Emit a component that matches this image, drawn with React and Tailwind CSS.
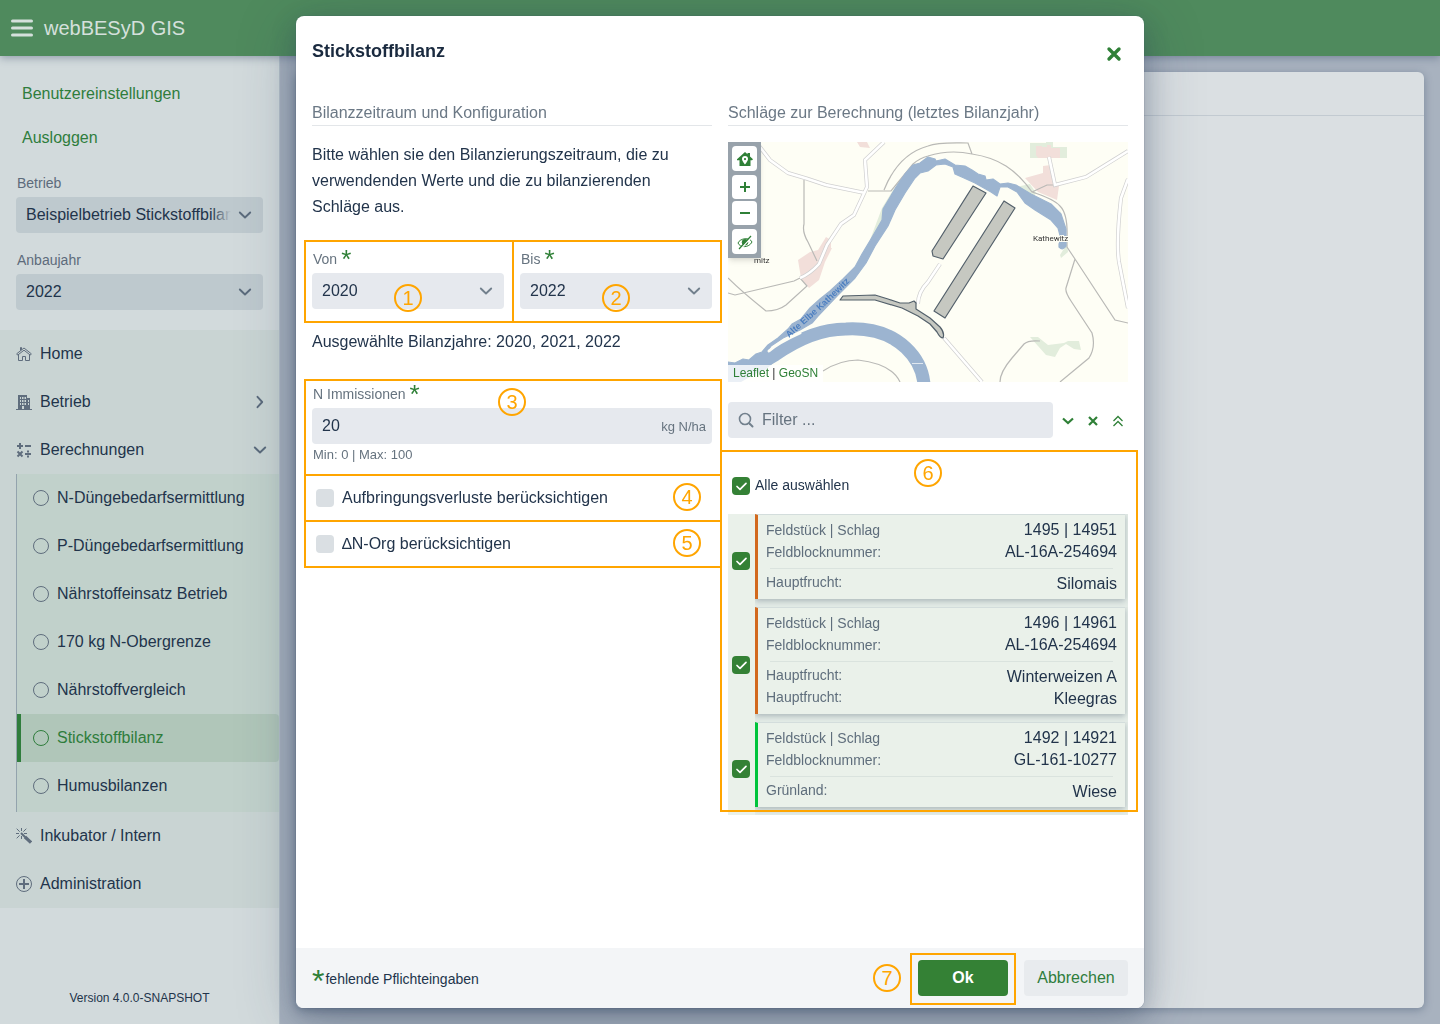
import React from "react";

function Chevron({ className = "", d = "M2.800 5.500L8 10.500l5.200-5" }) {
  return (
    <svg viewBox="0 0 16 16" className={`pointer-events-none size-4 ${className}`} fill="none" stroke="currentColor" strokeWidth="1.900" strokeLinecap="round" strokeLinejoin="round">
      <path d={d} />
    </svg>
  );
}

function Asterisk({ className }) {
  return (
    <span aria-hidden="true" className={`text-[#2f8037] ${className}`}>
      *
    </span>
  );
}

function Marker({ n, className }) {
  return (
    <span className={`pointer-events-none flex size-7 items-center justify-center rounded-full border-2 border-[#ffa500] text-xl leading-none text-[#ffa500] ${className}`}>
      {n}
    </span>
  );
}

function Outline({ className = "-right-[10px] -left-2 inset-y-0" }) {
  return <span aria-hidden="true" className={`pointer-events-none absolute z-10 border-2 border-[#ffa500] ${className}`} />;
}

function SideSelect({ id, label, value, fade }) {
  return (
    <div>
      <label htmlFor={id} className="block px-px pb-1 text-sm leading-5 text-[#5d6b7b]">
        {label}
      </label>
      <div className="relative">
        <select id={id} className="block h-9 w-full appearance-none overflow-hidden rounded bg-[#bec9ce] pr-8 pl-[10px] text-base text-[#22344b]">
          <option>{value}</option>
        </select>
        {fade && <span className="pointer-events-none absolute inset-y-0 right-8 w-5 bg-linear-to-r from-transparent to-[#bec9ce]" />}
        <Chevron className="absolute top-[10px] right-[10px] text-[#5b6b7c]" />
      </div>
    </div>
  );
}

function YearSelect({ id, label, value, marker }) {
  return (
    <div className="relative h-[83px]">
      <Outline />
      <label htmlFor={id} className="flex h-[33px] items-start gap-1 px-px pt-[9px] text-sm leading-5 text-[#66737f]">
        {label}
        <Asterisk className="text-[26px] leading-5" />
      </label>
      <div className="relative">
        <select id={id} className="block h-9 w-full appearance-none rounded bg-[#e6e9ee] px-[10px] text-base text-[#22344b]">
          <option>{value}</option>
        </select>
        <Chevron className="absolute top-[10px] right-[10px] text-[#72808d]" />
        <Marker n={marker} className="absolute top-[11px] left-[82px]" />
      </div>
    </div>
  );
}

function Checkbox({ id, checked, label }) {
  return (
    <span className="relative inline-flex size-[18px] shrink-0">
      <input id={id} type="checkbox" defaultChecked={checked} aria-label={label} className="peer size-[18px] appearance-none rounded bg-[#dadfe3] checked:bg-[#348135]" />
      <svg viewBox="0 0 18 18" className="pointer-events-none absolute inset-0 hidden size-[18px] peer-checked:block" fill="none" stroke="#fff" strokeWidth="1.700" strokeLinecap="round" strokeLinejoin="round">
        <path d="M5 9.500l3 2.800 6-6" />
      </svg>
    </span>
  );
}

const iconProps = { viewBox: "0 0 16 16", className: "size-4 shrink-0", "aria-hidden": true };

const icons = {
  home: (
    <svg {...iconProps} fill="none" stroke="currentColor">
      <path d="M.7 7.800L8 2l7.300 5.800-1 1.300L8 4.200 1.700 9.100zM4.500 4.500V1.500h1v2.300M2.500 9v5.500h4v-4h3v4h4V9" />
    </svg>
  ),
  building: (
    <svg {...iconProps} fill="currentColor" fillRule="evenodd">
      <path d="M2 1h9v3h3v11h2v1H0v-1h2zM4 3v2h1V3zM6 3v2h1.500V3zM8.500 3v2H10V3zM4 6v2h1V6zM6 6v2h1.500V6zM8.500 6v2H10V6zM4 9v2h1V9zM6 9v2h1.500V9zM8.500 9v2H10V9zM12 6v2h1V6zM12 9v2h1V9zM6 12v3h2v-3z" />
    </svg>
  ),
  calc: (
    <svg {...iconProps} fill="none" stroke="currentColor" strokeWidth="2">
      <path d="M1 4h6M4 1v6M9 4h6M9 12h6M1.500 9.500l5 5M6.500 9.500l-5 5" />
      <path d="M11 9.500h2M11 14.500h2" />
    </svg>
  ),
  circle: (
    <svg {...iconProps} fill="none" stroke="currentColor">
      <circle cx="8" cy="8" r="7.500" />
    </svg>
  ),
  wand: (
    <svg {...iconProps} fill="none" stroke="currentColor">
      <path d="M5.500 0v3M5.500 8v3M0 5.500h3M8 5.500h3M.7.7l3 3M10.300.7l-3 3M.7 10.300l3-3" />
      <path strokeWidth="3.200" d="M9 9l6 5.500" />
      <path strokeWidth="2" d="M5 5l5 5" />
    </svg>
  ),
  plus: (
    <svg {...iconProps} fill="none" stroke="currentColor">
      <circle cx="8" cy="8" r="7.500" />
      <path strokeWidth="2" d="M3 8h10M8 3v10" />
    </svg>
  ),
};

function NavItem({ icon, label, arrow }) {
  return (
    <a href="#" className="flex h-12 items-center gap-2 px-4 text-base text-[#22344b]">
      <span className="text-[#5f6d7d]">{icons[icon]}</span>
      {label}
      {arrow && <Chevron d={arrow === "right" ? "M5.500 2.800L10.200 8l-4.700 5.200" : undefined} className="mr-[-5px] ml-auto text-[#5b6b7c]" />}
    </a>
  );
}

const subItems = [
  "N-Düngebedarfsermittlung",
  "P-Düngebedarfsermittlung",
  "Nährstoffeinsatz Betrieb",
  "170 kg N-Obergrenze",
  "Nährstoffvergleich",
  "Stickstoffbilanz",
  "Humusbilanzen",
];

function Sidebar() {
  return (
    <aside className="flex w-[280px] shrink-0 flex-col border-r border-[#b4bfc9] bg-[#d2dadc]">
      <div className="flex flex-col items-start gap-2 pt-5 pl-[22px]">
        <button className="h-9 text-base text-[#2f7d3c]">Benutzereinstellungen</button>
        <button className="h-9 text-base text-[#2f7d3c]">Ausloggen</button>
      </div>
      <div className="flex flex-col gap-[17px] pt-[17px] pr-4 pb-5 pl-4">
        <SideSelect id="betrieb" label="Betrieb" value="Beispielbetrieb Stickstoffbilanz" fade />
        <SideSelect id="jahr" label="Anbaujahr" value="2022" />
      </div>
      <nav className="bg-[#c9d4d3]">
        <NavItem icon="home" label="Home" />
        <NavItem icon="building" label="Betrieb" arrow="right" />
        <NavItem icon="calc" label="Berechnungen" arrow="down" />
        <div className="ml-4 border-l border-[#93a3ad] bg-[#c1d1cb] pb-0.5">
          {subItems.map((t) =>
            t === "Stickstoffbilanz" ? (
              <a key={t} href="#" aria-current="page" className="flex h-12 items-center gap-2 rounded-r border-l-4 border-[#2f7d3c] bg-[#b0c6b9] pl-3 text-base text-[#2f7d3c]">
                {icons.circle}
                {t}
              </a>
            ) : (
              <a key={t} href="#" className="flex h-12 items-center gap-2 pl-4 text-base text-[#22344b]">
                <span className="text-[#5f6d7d]">{icons.circle}</span>
                {t}
              </a>
            ),
          )}
        </div>
        <NavItem icon="wand" label="Inkubator / Intern" />
        <NavItem icon="plus" label="Administration" />
      </nav>
      <p className="mt-auto pb-[18px] text-center text-xs leading-4 text-[#22344b]">Version 4.0.0-SNAPSHOT</p>
    </aside>
  );
}

function MapButton({ label, className, children }) {
  return (
    <button aria-label={label} className={`flex w-[25px] items-center justify-center rounded-sm bg-white text-[#2f8037] ${className}`}>
      {children}
    </button>
  );
}

function FieldMap() {
  const paths =
    "M0 36L16 18V0M76 38V82Q74 90 80 100L89 119M0 136Q14 150 38 169Q50 169 58 163L79 144L72 136M0 151L7 153L66 139L72 136M140 49H163L185 22Q192 16 200 14M156 48C164 28 178 10 200 4M200 4C210 0 225 1 240 1L244 12M200 14C216 9 230 9 244 12Q264 15 278 24Q292 33 304 50Q326 57 332 64Q340 72 339 96V105L347 117L387 178L400 181M304 50L319 43L328 43M347 117L338 146Q337 150 343 159L364 191Q368 205 361 216L332 240M95 229Q112 218 130 218Q164 222 172 240M272 240Q272 230 284 216L296 202Q300 198 312 199";
  const streets =
    "M28 0L42 18L60 31Q78 36 98 43L137 51M156 0L137 18L139 45L126 73L113 82L99 103L91 122Q82 132 72 136M321 15L327 43L358 35L400 9M400 37L393 56Q388 100 391 120L400 166M212 122L200 140Q190 150 190 162M216 196L254 240";
  return (
    <div className="relative h-60 overflow-hidden">
      <svg viewBox="0 0 400 240" preserveAspectRatio="xMidYMid slice" className="size-full bg-[#fefef5]" role="img" aria-label="Karte">
        <path fill="#e2eddc" d="M302 1h16V0h7v5h14v11h-37zM302 195h8l10 8 16-2 4-2h11l2 9-7-1-8-5-6 4-5 9-9-2-8-9zM187 21l-22 27-11 18-12 32 12-5 15-38 20-30zM288 45l14-3 6 9-4 6-14-6zM332 66l7 36 1 8-7 6-1-3 5-8-3-18z" />
        <path fill="#f2dfda" d="M129 0l3 5 10 1-3-6zM98 95l5 3v8l1 0-7 14-6 18-10 8-8-10-3-18 12-8 8-2zM308 4h6v1h5V3h4v3h9v10h-22l-2-3zM315 24l8-1 2 17 6 4-2 14-19-8-13-14 18-5z" />
        <path fill="none" stroke="#b9b9b6" strokeWidth="1.200" d={paths} />
        <path fill="none" stroke="#d0d0d0" strokeWidth="4" d={streets} />
        <path fill="none" stroke="#fff" strokeWidth="2.600" d={streets} />
        <path
          fill="#9cb4d0"
          stroke="#9cb4d0"
          strokeWidth="1.200"
          strokeLinejoin="round"
          d="M0 220L7 221L15 217L21 218L28 212L34 210L40 203L50 196L60 187L64 182L73 177L82 166L92 157L102 149L115 137L127 125L134 112L143 97L154 78L155 67L161 57L168 45L177 32L185 23L192 21L200 15L207 17L208 19L217 17L227 23L237 24L244 28L250 32L257 34L258 38L265 37L272 42L280 41L288 43L303 52L323 62L333 72L338 87L338 104Q335 109 331 105L331 102L333 97L330 86L323 78L307 68L297 61L289 50L280 45L272 45L269 54L263 50L247 41L236 36L227 32L225 25L217 22L208 23L200 29L192 31L187 36L177 51L167 68L160 84L147 104L138 121L127 136L110 153L90 174L84 181L72 188L55 196L43 204L40 209L48 218L36 228L0 240z"
        />
        <path fill="none" stroke="#9cb4d0" strokeWidth="13" d="M0 240L47 213Q84 187 118 187Q156 185 178 206Q194 221 196 242" />
        <path fill="none" stroke="#fefef5" strokeWidth="3" strokeLinecap="round" d="M41 209Q50 201 72 191" />
        <path fill="none" stroke="#dfe7ef" d="M184 221.500h11" />
        <g fill="#c6c8c1" stroke="#53606b" strokeWidth="1.200" strokeLinejoin="round">
          <path d="M245 44l13 7-43 66-10-3-1-5z" />
          <path d="M276 59l11 7-70 110-11-7z" />
          <path d="M115 154L147 153L160 157L172 161L181 161L186 159L188 161V167L202 176L212 185Q217 191 215 196Q212 196 209 190L202 182L190 174L174 166L147 158L112 158z" />
        </g>
        <path id="elbe" fill="none" d="M61 196L96 165L132 130" />
        <text fontSize="9" fontWeight="bold" fill="#4c7fc0" fontFamily="Liberation Sans, sans-serif">
          <textPath href="#elbe">Alte Elbe Kathewitz</textPath>
        </text>
        <g fontSize="8" fill="#333" fontFamily="Roboto, sans-serif">
          <text x="305" y="99" stroke="#fefef5" strokeWidth="2" paintOrder="stroke">Kathewitz</text>
          <text x="26" y="121">mitz</text>
        </g>
      </svg>
      <div className="absolute top-0 left-0 flex w-[33px] flex-col items-center bg-[#98a2ab] py-1 shadow-md">
        <MapButton label="Betrieb anzeigen" className="h-[25px]">
          <svg viewBox="0 0 16 16" className="size-4" fill="currentColor" fillRule="evenodd">
            <path d="M8 1l2.500 2.300V2H13v3.500l3 2.800-1 1h-1.500V15h-11V9.300H0V8.300zM8 5a3 3 0 0 0-3 3c0 2 3 5.500 3 5.500S11 10 11 8a3 3 0 0 0-3-3zm0 2a1 1 0 1 1 0 2.200A1 1 0 0 1 8 7z" />
          </svg>
        </MapButton>
        <MapButton label="Vergrößern" className="mt-1 h-6">
          <svg viewBox="0 0 12 12" className="size-3" stroke="currentColor" strokeWidth="2"><path d="M1 6h10M6 1v10" /></svg>
        </MapButton>
        <MapButton label="Verkleinern" className="mt-0.5 h-6">
          <svg viewBox="0 0 12 12" className="size-3" stroke="currentColor" strokeWidth="2"><path d="M1 6h10" /></svg>
        </MapButton>
        <MapButton label="Ausblenden" className="mt-1 h-[25px]">
          <svg viewBox="0 0 16 16" className="size-4" fill="none" stroke="currentColor">
            <path d="M1 9c2-5 12-6 14-1-3 6-12 6-14 1z" />
            <circle cx="8" cy="8.300" r="2.800" fill="currentColor" />
            <path stroke="#fff" strokeWidth="1.500" d="M3 15.500L15.500 2" />
            <path strokeWidth="1.200" d="M2 15L14 2" />
          </svg>
        </MapButton>
      </div>
      <div className="absolute bottom-0 left-0 bg-white/80 px-[5px] text-xs leading-[17px] text-[#333]">
        <a href="#" className="text-[#2f8037]">Leaflet</a> | <a href="#" className="text-[#2f8037]">GeoSN</a>
      </div>
    </div>
  );
}

const fields = [
  { id: "1495 | 14951", block: "AL-16A-254694", crops: [["Hauptfrucht:", "Silomais"]] },
  { id: "1496 | 14961", block: "AL-16A-254694", crops: [["Hauptfrucht:", "Winterweizen A"], ["Hauptfrucht:", "Kleegras"]] },
  { id: "1492 | 14921", block: "GL-161-10277", green: true, crops: [["Grünland:", "Wiese"]] },
];

function Row({ label, value, low }) {
  return (
    <div className="flex h-[22px] justify-between">
      <dt className={low ? "text-sm leading-5 text-[#5f6e7c]" : "text-sm leading-[22px] text-[#5f6e7c]"}>{label}</dt>
      <dd className={low ? "pt-0.5 leading-5 text-[#22344b]" : "leading-[22px] text-[#22344b]"}>{value}</dd>
    </div>
  );
}

function FieldCard({ f }) {
  return (
    <li className="flex items-center bg-[#eaf1ea] pl-1">
      <Checkbox checked label={f.id} />
      <div className="ml-[5px] flex-1 overflow-hidden bg-[#e4ece7] pr-[3px] pb-2">
        <dl className={`border-t border-l-[3px] border-t-[#d3dddc] bg-[#eaf1ea] pt-1 pr-2 pb-[5px] pl-2 shadow-[0_2px_6px_rgba(60,80,100,0.35)] ${f.green ? "border-l-[#00c43c]" : "border-l-[#d2691e]"}`}>
          <Row label="Feldstück | Schlag" value={f.id} />
          <Row label="Feldblocknummer:" value={f.block} />
          <div className="mx-1 mt-[5px] mb-[3px] h-px bg-[#dae3de]" />
          {f.crops.map(([l, v]) => (
            <Row key={v} label={l} value={v} low />
          ))}
        </dl>
      </div>
    </li>
  );
}

function IconButton({ label, children }) {
  return (
    <button aria-label={label} className="flex w-[25px] justify-center pt-0.5 pl-1 text-[#2f8037]">
      {children}
    </button>
  );
}

function Dialog() {
  return (
    <div role="dialog" aria-labelledby="dlg-title" className="flex w-full max-w-[848px] flex-col overflow-hidden rounded-lg bg-white shadow-[0_0_0_1px_rgba(60,80,105,0.1),0_8px_24px_rgba(40,58,85,0.28),0_12px_60px_rgba(40,58,85,0.28)]">
      <header className="flex h-[86px] items-start justify-between px-4 pt-[21px]">
        <h2 id="dlg-title" className="text-lg leading-7 font-bold text-[#1a2a3f]">Stickstoffbilanz</h2>
        <button aria-label="Schließen" className="mt-[9px] mr-1.5 text-[#2f8037]">
          <svg viewBox="0 0 16 16" className="size-4" fill="none" stroke="currentColor" strokeWidth="3.400" strokeLinecap="round"><path d="M3 3l10 10M13 3L3 13" /></svg>
        </button>
      </header>
      <div className="grid flex-1 grid-cols-2 content-start gap-4 px-4">
        <section>
          <h3 className="mb-4 h-6 border-b border-[#e3e6e9] text-base leading-[21px] text-[#6b7885]">Bilanzzeitraum und Konfiguration</h3>
          <p className="mb-5 text-base leading-[26px] text-[#22344b]">
            Bitte wählen sie den Bilanzierungszeitraum, die zu verwendenden Werte und die zu bilanzierenden Schläge aus.
          </p>
          <div className="grid grid-cols-2 gap-4">
            <YearSelect id="von" label="Von" value="2020" marker={1} />
            <YearSelect id="bis" label="Bis" value="2022" marker={2} />
          </div>
          <p className="mt-[7px] text-base leading-6 text-[#22344b]">Ausgewählte Bilanzjahre: 2020, 2021, 2022</p>
          <div className="relative mt-[25px] h-[97px]">
            <Outline />
            <label htmlFor="immi" className="flex h-[29px] items-start gap-1 px-px pt-[5px] text-sm leading-5 text-[#66737f]">
              N Immissionen
              <Asterisk className="text-[26px] leading-5" />
            </label>
            <div className="flex h-9 items-center rounded bg-[#e6e9ee] pr-1.5 pl-[10px]">
              <input id="immi" defaultValue="20" className="min-w-0 flex-1 bg-transparent text-base text-[#22344b]" />
              <span className="pt-0.5 text-[13px] text-[#66737f]">kg N/ha</span>
            </div>
            <p className="px-px pt-px text-[13px] leading-5 text-[#66737f]">Min: 0 | Max: 100</p>
            <Marker n={3} className="absolute top-[9px] left-[186px]" />
          </div>
          {[
            ["verluste", "Aufbringungsverluste berücksichtigen", 4],
            ["norg", "∆N-Org berücksichtigen", 5],
          ].map(([id, text, n]) => (
            <div key={id} className="relative -mt-0.5 flex h-12 items-center gap-2 pr-[11px] pl-1">
              <Outline />
              <Checkbox id={id} />
              <label htmlFor={id} className="flex-1 text-base text-[#22344b]">{text}</label>
              <Marker n={n} className="mb-0.5" />
            </div>
          ))}
        </section>
        <section>
          <h3 className="mb-4 h-6 border-b border-[#e3e6e9] text-base leading-[21px] text-[#6b7885]">Schläge zur Berechnung (letztes Bilanzjahr)</h3>
          <FieldMap />
          <div className="mt-5 flex items-center">
            <label className="flex h-9 flex-1 items-center gap-2 rounded bg-[#e6e9ee] pl-[10px]">
              <svg viewBox="0 0 16 16" className="size-4 text-[#72808d]" fill="none" stroke="currentColor" strokeWidth="1.600" strokeLinecap="round">
                <circle cx="7" cy="7" r="5.500" />
                <path strokeWidth="2" d="M11.500 11.500L14.500 14.500" />
              </svg>
              <input placeholder="Filter ..." aria-label="Filter" className="min-w-0 flex-1 bg-transparent text-base text-[#22344b] placeholder:text-[#66737f]" />
            </label>
            <IconButton label="Aufklappen">
              <svg viewBox="0 0 12 12" className="size-3" fill="none" stroke="currentColor" strokeWidth="2.200"><path d="M1 3.500l5 4.500 5-4.500" /></svg>
            </IconButton>
            <IconButton label="Leeren">
              <svg viewBox="0 0 12 12" className="size-3" fill="none" stroke="currentColor" strokeWidth="2.200"><path d="M2 2l8 8M10 2l-8 8" /></svg>
            </IconButton>
            <IconButton label="Einklappen">
              <svg viewBox="0 0 12 12" className="size-3" fill="none" stroke="currentColor" strokeWidth="1.300"><path d="M1.500 6L6 1.500 10.500 6M1.500 11L6 6.500 10.500 11" /></svg>
            </IconButton>
          </div>
          <div className="relative mt-3">
            <Outline className="top-0 -right-[10px] bottom-[3px] -left-2" />
            <Marker n={6} className="absolute top-[9px] left-[186px]" />
            <div className="flex h-16 items-center gap-[5px] pt-[7px] pl-1">
              <Checkbox id="alle" checked />
              <label htmlFor="alle" className="pb-0.5 text-sm text-[#22344b]">Alle auswählen</label>
            </div>
            <ul>
              {fields.map((f) => (
                <FieldCard key={f.id} f={f} />
              ))}
            </ul>
          </div>
        </section>
      </div>
      <footer className="flex h-15 items-center bg-[#f3f5f7] px-4">
        <Asterisk className="mr-px pt-1.5 text-[32px] leading-9" />
        <span className="flex-1 pt-0.5 text-sm text-[#22344b]">fehlende Pflichteingaben</span>
        <Marker n={7} className="mr-[17px]" />
        <div className="relative mr-4">
          <Outline className="-top-[7px] -right-2 -bottom-[9px] -left-2" />
          <button className="h-9 w-[90px] rounded bg-[#348135] text-base font-bold text-white">Ok</button>
        </div>
        <button className="h-9 w-[104px] rounded bg-[#e8ebee] text-base text-[#2f7d3c]">Abbrechen</button>
      </footer>
    </div>
  );
}

export default function App() {
  return (
    <div className="flex h-screen flex-col bg-[#a8b2bf] font-['Liberation_Sans',Arial,sans-serif]">
      <header className="z-10 flex h-14 shrink-0 items-center gap-[11px] bg-[#4f8a5d] px-[11px] text-[#d5e0dc] shadow-[0_2px_8px_rgba(50,70,100,0.4)]">
        <button aria-label="Menü">
          <svg viewBox="0 0 22 18" className="h-[18px] w-[22px]" stroke="currentColor" strokeWidth="3" strokeLinecap="round"><path d="M1.500 2h19M1.500 9h19M1.500 16h19" /></svg>
        </button>
        <h1 className="text-xl leading-7">webBESyD GIS</h1>
      </header>
      <div className="flex min-h-0 flex-1">
        <Sidebar />
        <main className="flex flex-1 p-4">
          <div className="flex-1 rounded-md bg-[#dadfe2] shadow-[0_2px_8px_rgba(50,70,100,0.4)]">
            <div className="h-11 border-b border-[#c2cad1]" />
          </div>
        </main>
      </div>
      <div className="fixed inset-0 z-20 flex justify-center p-4">
        <Dialog />
      </div>
    </div>
  );
}
